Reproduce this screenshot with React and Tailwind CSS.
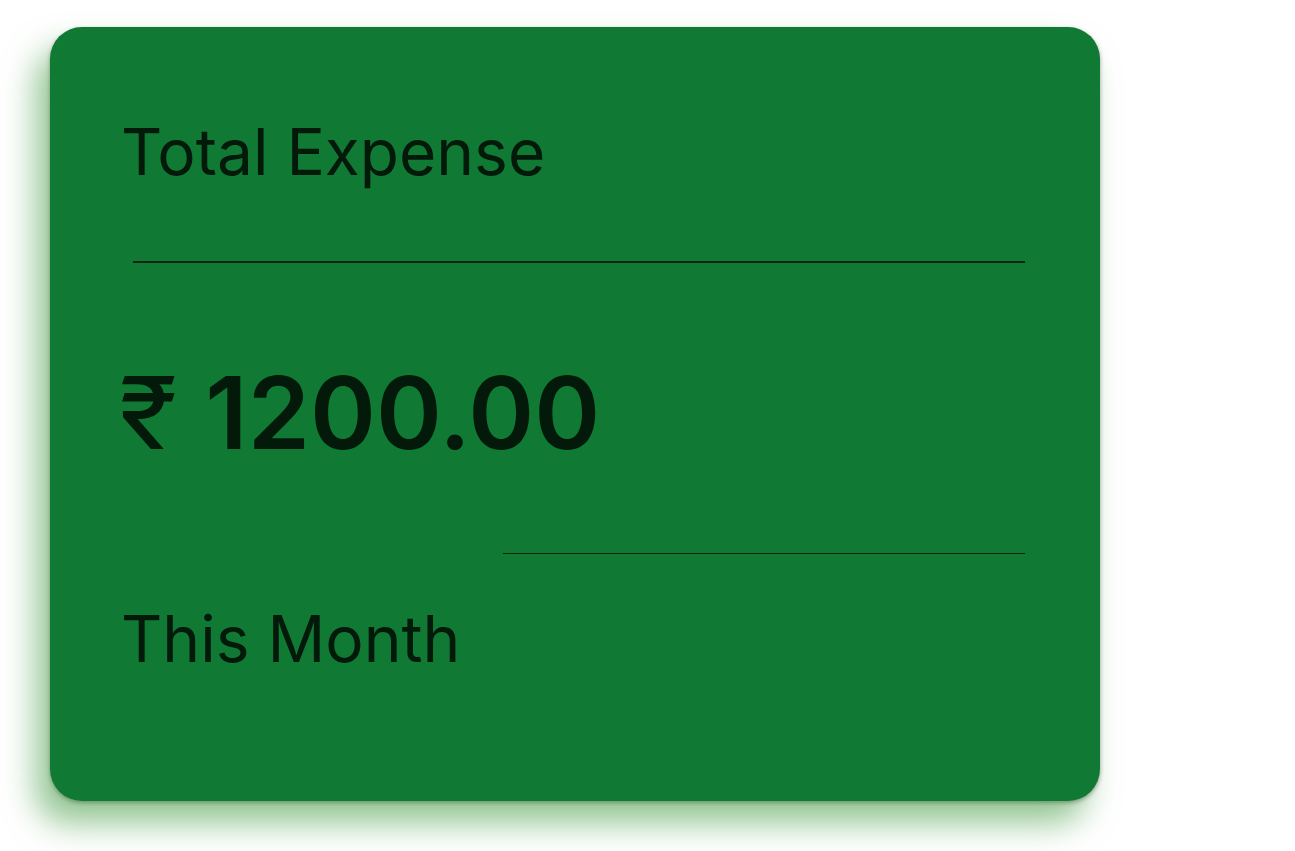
import React from "react";

function ExpenseCard() {
  return (
    <div className="w-[1050px] h-[774px] rounded-[32px] bg-[#107a35] text-[#03190a] pl-[71px] pr-[75px] pt-[93px] flex flex-col shadow-[-14px_22px_32px_rgba(40,140,40,0.5),0_2px_4px_rgba(0,0,0,0.35)]">
      <p className="text-[64px] leading-none">Total Expense</p>
      <div className="mt-[77px] ml-[12px] h-[1.5px] bg-[#0b2613]" />
      <p className="mt-[100px] -ml-[2px] text-[100px] leading-none font-semibold">
        <span className="font-normal inline-block scale-x-[1.08] origin-left mr-[7px]">₹</span> 1200.00
      </p>
      <div className="mt-[90px] ml-auto w-[522px] h-[1.5px] bg-[#0b2613]" />
      <p className="mt-[53px] text-[64px] leading-none">This Month</p>
    </div>
  );
}

export default function App() {
  return (
    <div className="w-[1295px] h-[851px] bg-white pt-[27px] pl-[50px] font-['Inter','Liberation_Sans',sans-serif]">
      <ExpenseCard />
    </div>
  );
}
